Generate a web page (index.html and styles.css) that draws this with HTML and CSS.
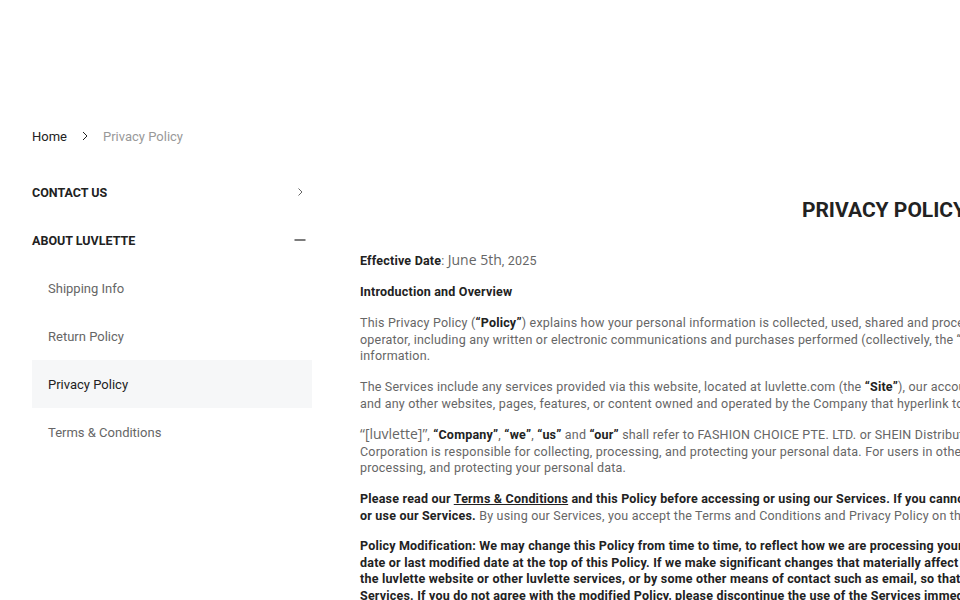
FILE: index.html
```html
<!DOCTYPE html>
<html lang="en">
<head>
<meta charset="utf-8">
<title>Privacy Policy</title>
<link rel="stylesheet" href="styles.css">
</head>
<body>
<div class="page">
  <header class="header"></header>
  <nav class="crumbs">
    <a class="crumb-home">Home</a>
    <svg class="crumb-sep" width="12" height="12" viewBox="0 0 12 12"><path d="M4 2l4 4-4 4" fill="none" stroke="#222" stroke-width="1"/></svg>
    <span class="crumb-current">Privacy Policy</span>
  </nav>
  <div class="layout">
    <aside class="side">
      <div class="side-head">
        <span>CONTACT US</span>
        <svg width="12" height="12" viewBox="0 0 12 12"><path d="M4.5 2.5l3.5 3.5-3.5 3.5" fill="none" stroke="#666" stroke-width="1"/></svg>
      </div>
      <div class="side-head">
        <span>ABOUT LUVLETTE</span>
        <svg width="12" height="12" viewBox="0 0 12 12"><path d="M0.5 6h11" fill="none" stroke="#444" stroke-width="1.4"/></svg>
      </div>
      <div class="side-item">Shipping Info</div>
      <div class="side-item">Return Policy</div>
      <div class="side-item active">Privacy Policy</div>
      <div class="side-item">Terms &amp; Conditions</div>
    </aside>
    <main class="main">
      <h1 class="title">PRIVACY POLICY</h1>
      <p class="p"><b>Effective Date</b>: <span class="alt">June 5th</span>, 2025</p>
      <p class="p intro"><b>Introduction and Overview</b></p>
      <p class="p">This Privacy Policy (<b>“Policy”</b>) explains how your personal information is collected, used, shared and processed when you visit the Site or interact with its<br>operator, including any written or electronic communications and purchases performed (collectively, the “Services”), and your rights regarding your personal<br>information.</p>
      <p class="p">The Services include any services provided via this website, located at luvlette.com (the <b>“Site”</b>), our accounts on social media platforms, our apps,<br>and any other websites, pages, features, or content owned and operated by the Company that hyperlink to this Policy.</p>
      <p class="p"><span class="alt">“[luvlette]”</span>, <b>“Company”</b>, <b>“we”</b>, <b>“us”</b> and <b>“our”</b> shall refer to FASHION CHOICE PTE. LTD. or SHEIN Distribution Corporation. In the United States, SHEIN Distribution<br>Corporation is responsible for collecting, processing, and protecting your personal data. For users in other regions, FASHION CHOICE PTE. LTD. is responsible for collecting,<br>processing, and protecting your personal data.</p>
      <p class="p"><b>Please read our <a class="link">Terms &amp; Conditions</a> and this Policy before accessing or using our Services. If you cannot agree with this Policy, please do not access<br>or use our Services.</b> By using our Services, you accept the Terms and Conditions and Privacy Policy on the Site.</p>
      <p class="p"><b>Policy Modification: We may change this Policy from time to time, to reflect how we are processing your data. We will update the effective<br>date or last modified date at the top of this Policy. If we make significant changes that materially affect your rights, we will notify you on<br>the luvlette website or other luvlette services, or by some other means of contact such as email, so that you can review them before using the<br>Services. If you do not agree with the modified Policy, please discontinue the use of the Services immediately.</b></p>
    </main>
  </div>
</div>
</body>
</html>
```
FILE: styles.css
```css
html, body {
  margin: 0;
  padding: 0;
  overflow: hidden;
  background: #fff;
}
.page {
  width: 1440px;
  font-family: Roboto, "Liberation Sans", sans-serif;
  font-size: 12px;
  color: #666;
}
.header {
  height: 104px;
}
.crumbs {
  display: flex;
  align-items: center;
  gap: 12px;
  padding: 0 32px;
  height: 64px;
}
.crumb-home {
  color: #222;
  font-size: 13px;
}
.crumb-current {
  color: #999;
  font-size: 13px;
}
.layout {
  display: flex;
  gap: 48px;
  padding: 0 32px;
}
.side {
  width: 280px;
  flex: none;
}
.side-head {
  display: flex;
  align-items: center;
  justify-content: space-between;
  height: 48px;
  padding-right: 6px;
  font-weight: 700;
  color: #222;
  font-size: 12.5px;
}
.side-item {
  height: 48px;
  display: flex;
  align-items: center;
  padding-left: 16px;
  font-size: 13px;
  color: #666;
}
.side-item.active {
  background: #f6f7f8;
  color: #222;
}
.main {
  flex: 1;
  min-width: 0;
  font-size: 12.5px;
  letter-spacing: 0.2px;
}
.title {
  margin: 28px 0 0;
  text-align: center;
  font-size: 21px;
  font-weight: 700;
  color: #222;
  line-height: 28px;
  letter-spacing: 0;
}
.p {
  margin: 14px 0 0;
  line-height: 16.6px;
}
.title + .p {
  margin-top: 28px;
}
.intro {
  margin-bottom: 15px;
}
.p b {
  color: #222;
  font-weight: 700;
}
.alt {
  font-family: "Open Sans", sans-serif;
  font-size: 14px;
  letter-spacing: 0;
  color: #666;
}
.link {
  color: #222;
  text-decoration: underline;
}
```
